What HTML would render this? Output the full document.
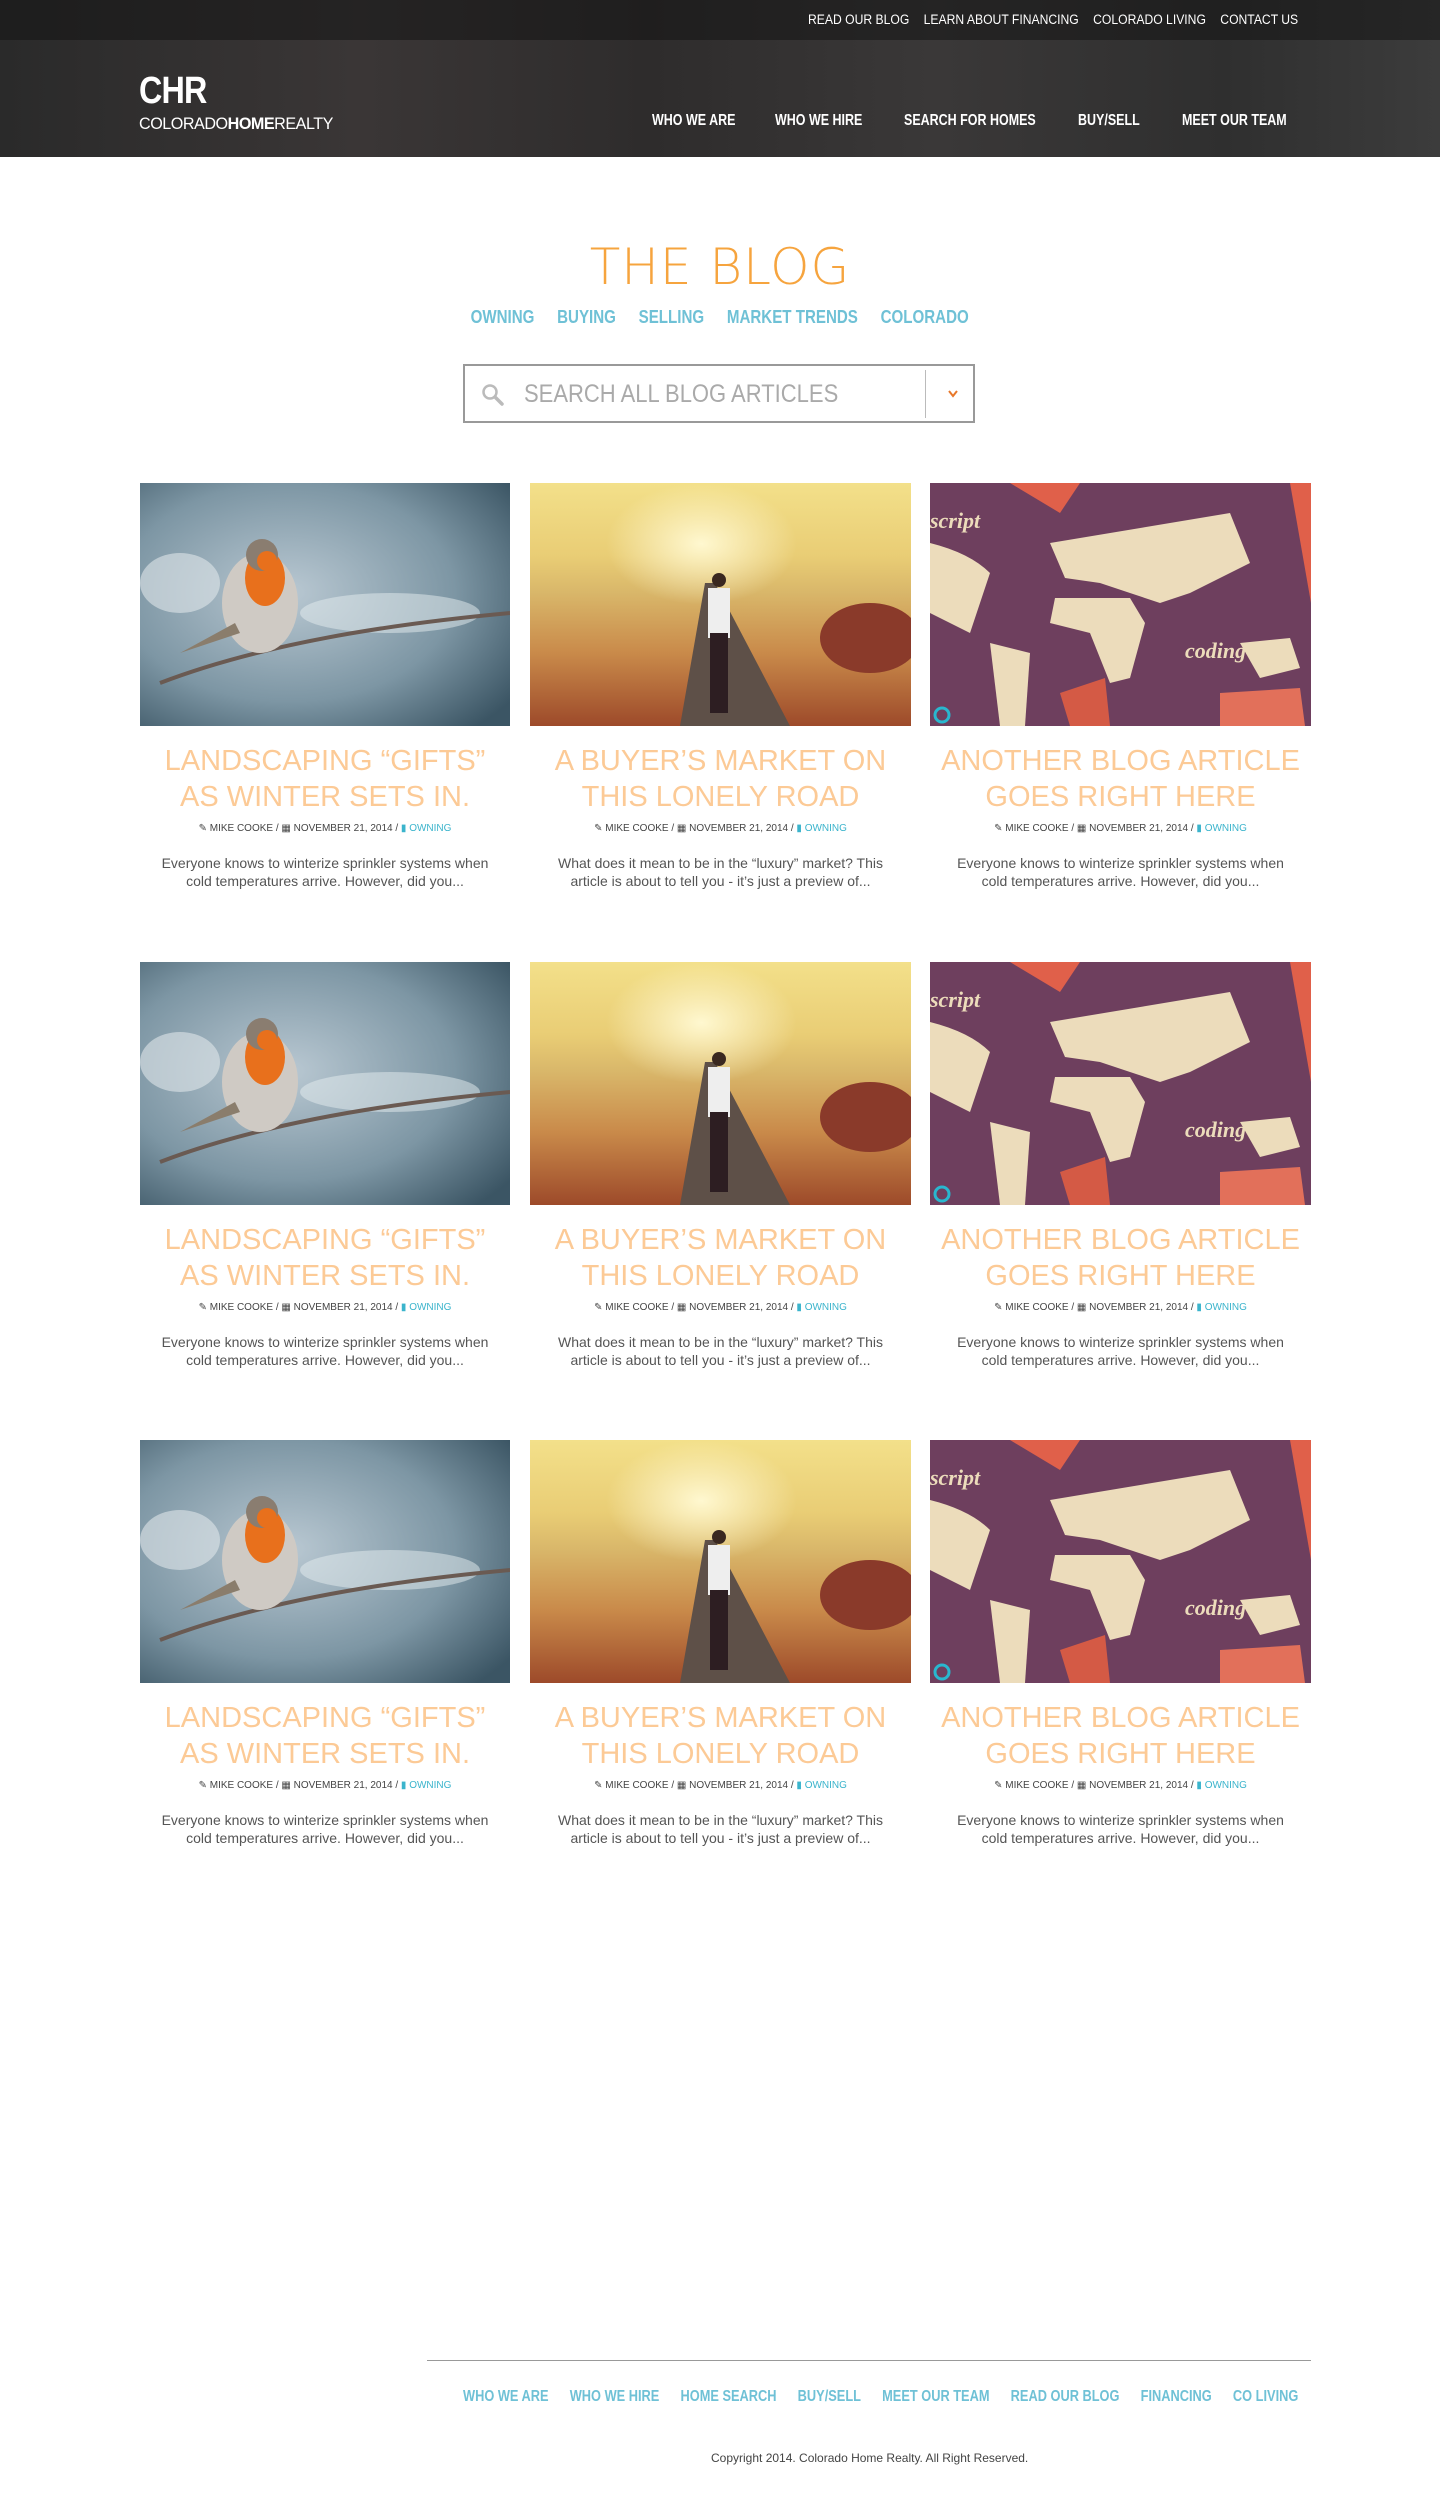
<!DOCTYPE html>
<html><head><meta charset="utf-8"><style>
*{margin:0;padding:0;box-sizing:border-box}
body{width:1440px;height:2500px;background:#fff;font-family:"Liberation Sans",sans-serif;position:relative;overflow:hidden}
.abs{position:absolute}
.hdr{left:0;top:0;width:1440px;height:157px;background:linear-gradient(90deg,#2a2a2a 0%,#3a3636 25%,#2e2c2c 45%,#3a3838 65%,#2f2f2f 85%,#3c3c3c 100%)}
.topbar{left:0;top:0;width:1440px;height:40px;background:rgba(20,20,20,.55)}
.sx{transform-origin:0 0;white-space:nowrap}
.toplinks{top:12px;left:808px;color:#fff;font-size:13.5px;transform:scaleX(.9)}
.toplinks span{margin-right:16px}
.nav{top:112px;color:#fff;font-size:16px;font-weight:bold;transform:scaleX(.78)}
.title{top:238px;left:0;width:1440px;text-align:center;color:#f6a43e;font-size:50px;letter-spacing:1px;font-family:"DejaVu Sans","Liberation Sans",sans-serif;font-weight:200}
.cats{top:307px;left:0;width:1440px;text-align:center;color:#6fc1d6;font-size:18px;font-weight:bold;transform:scaleX(.84);transform-origin:718px 0;white-space:nowrap}
.cats span{margin:0 11px}
.search{left:463px;top:364px;width:512px;height:59px;border:2px solid #999}
.card .img{position:absolute;top:0;left:0}
.ttl{position:absolute;left:0;width:100%;text-align:center;color:#fcca96;font-size:29px;line-height:36px;top:260px;white-space:nowrap}
.meta{position:absolute;left:0;width:100%;text-align:center;top:340px;font-size:10px;color:#444;white-space:nowrap}
.meta b{color:#3bb4cc;font-weight:normal}
.ex{position:absolute;left:-10px;width:calc(100% + 20px);text-align:center;top:371px;font-size:14px;line-height:18px;color:#555;white-space:nowrap}
.flinks{top:2388px;left:463px;color:#6fc1d6;font-size:16px;font-weight:bold;transform:scaleX(.8)}
.flinks span{margin-right:22px}
</style></head><body>
<div class="abs hdr"></div>
<div class="abs topbar"></div>
<div class="abs toplinks sx"><span>READ OUR BLOG</span><span>LEARN ABOUT FINANCING</span><span>COLORADO LIVING</span><span>CONTACT US</span></div>
<div class="abs sx" style="left:139px;top:70px;color:#fff;font-size:38px;font-weight:bold;letter-spacing:-1px;transform:scaleX(.85)">CHR</div>
<div class="abs sx" style="left:139px;top:114px;color:#fff;font-size:17px;letter-spacing:-0.5px;transform:scaleX(.95)">COLORADO<b>HOME</b>REALTY</div>
<div class="abs nav sx" style="left:652px">WHO WE ARE</div>
<div class="abs nav sx" style="left:775px">WHO WE HIRE</div>
<div class="abs nav sx" style="left:904px">SEARCH FOR HOMES</div>
<div class="abs nav sx" style="left:1078px">BUY/SELL</div>
<div class="abs nav sx" style="left:1182px">MEET OUR TEAM</div>

<div class="abs title">THE BLOG</div>
<div class="abs cats"><span>OWNING</span> <span>BUYING</span> <span>SELLING</span> <span>MARKET TRENDS</span> <span>COLORADO</span></div>
<div class="abs search">
<svg class="abs" style="left:16px;top:17px" width="24" height="24" viewBox="0 0 24 24"><circle cx="9" cy="9" r="6.5" fill="none" stroke="#bbb" stroke-width="2.5"/><path d="M14 14l7 7" stroke="#bbb" stroke-width="3.5" stroke-linecap="round"/></svg>
<div class="abs sx" style="left:59px;top:14px;font-size:25px;color:#aaa;transform:scaleX(.88)">SEARCH ALL BLOG ARTICLES</div>
<div class="abs" style="left:460px;top:4px;width:1px;height:48px;background:#bbb"></div>
<svg class="abs" style="left:483px;top:24px" width="10" height="8" viewBox="0 0 10 8"><path d="M1 1l4 5 4-5" fill="none" stroke="#e8782a" stroke-width="2"/></svg>
</div>

<div id="cards"></div>
<script>
var cols=[{x:140,w:370,t:['LANDSCAPING “GIFTS”','AS WINTER SETS IN.'],e:['Everyone knows to winterize sprinkler systems when','cold temperatures arrive. However, did you...'],k:0},
{x:530,w:381,t:['A BUYER’S MARKET ON','THIS LONELY ROAD'],e:['What does it mean to be in the “luxury” market? This','article is about to tell you - it’s just a preview of...'],k:1},
{x:930,w:381,t:['ANOTHER BLOG ARTICLE','GOES RIGHT HERE'],e:['Everyone knows to winterize sprinkler systems when','cold temperatures arrive. However, did you...'],k:2}];
var imgs=[
function(w){return '<svg width="'+w+'" height="243"><defs><radialGradient id="b1" cx="40%" cy="45%" r="75%"><stop offset="0" stop-color="#b9c8d2"/><stop offset=".6" stop-color="#7d96a4"/><stop offset="1" stop-color="#3b5564"/></radialGradient></defs><rect width="'+w+'" height="243" fill="url(#b1)"/><ellipse cx="40" cy="100" rx="40" ry="30" fill="#dfe6ea" opacity=".6"/><ellipse cx="250" cy="130" rx="90" ry="20" fill="#e6edf0" opacity=".5"/><path d="M20 200 Q150 150 370 130" stroke="#6a5a52" stroke-width="4" fill="none"/><ellipse cx="120" cy="120" rx="38" ry="50" fill="#cfcac4"/><ellipse cx="125" cy="95" rx="20" ry="28" fill="#e8701c"/><circle cx="122" cy="72" r="16" fill="#8a7d70"/><circle cx="127" cy="78" r="10" fill="#e8701c"/><path d="M95 140 L40 170 L100 150Z" fill="#8a7d6c"/></svg>'},
function(w){return '<svg width="'+w+'" height="243"><defs><linearGradient id="b2" x1="0" y1="0" x2="0" y2="1"><stop offset="0" stop-color="#f3e08a"/><stop offset=".3" stop-color="#e9cd75"/><stop offset=".45" stop-color="#d9b76a"/><stop offset=".7" stop-color="#c98a4a"/><stop offset="1" stop-color="#9d4a2a"/></linearGradient><radialGradient id="s2" cx="45%" cy="25%" r="25%"><stop offset="0" stop-color="#fff8d0"/><stop offset="1" stop-color="#fff8d0" stop-opacity="0"/></radialGradient></defs><rect width="'+w+'" height="243" fill="url(#b2)"/><rect width="'+w+'" height="243" fill="url(#s2)"/><path d="M150 243 L175 100 L185 100 L260 243Z" fill="#5e5048"/><ellipse cx="340" cy="155" rx="50" ry="35" fill="#8a3a2a"/><rect x="178" y="105" width="22" height="50" fill="#eee"/><rect x="180" y="150" width="18" height="80" fill="#2d1e22"/><circle cx="189" cy="97" r="7" fill="#3a2820"/></svg>'},
function(w){return '<svg width="'+w+'" height="243"><rect width="'+w+'" height="243" fill="#6e3f5e"/><path d="M80 0 L150 0 L130 30Z" fill="#e0604a"/><path d="M360 0 L381 0 L381 120Z" fill="#e0604a"/><path d="M0 60 Q40 70 60 90 L40 150 Q20 140 0 130Z" fill="#ecdcbb"/><path d="M60 160 L100 170 L95 243 L70 243Z" fill="#ecdcbb"/><path d="M120 60 L300 30 L320 80 L260 110 L230 120 L200 110 L170 100 L135 95Z" fill="#ecdcbb"/><path d="M125 115 L200 115 L215 140 L200 195 L180 200 L160 150 L120 140Z" fill="#ecdcbb"/><path d="M310 160 L360 155 L370 185 L330 195Z" fill="#ecdcbb"/><path d="M130 210 L175 195 L180 243 L140 243Z" fill="#d45a45"/><path d="M290 210 L370 205 L375 243 L290 243Z" fill="#e2705a"/><text x="255" y="175" font-family=\'Liberation Serif\' font-style="italic" font-weight="bold" font-size="22" fill="#ecdcbb">coding</text><text x="0" y="45" font-family=\'Liberation Serif\' font-style="italic" font-weight="bold" font-size="22" fill="#ecdcbb">script</text><circle cx="12" cy="232" r="7" fill="none" stroke="#29b7cf" stroke-width="3"/></svg>'}];
var h='';
[483,962,1440].forEach(function(y){cols.forEach(function(c){
h+='<div class="abs card" style="left:'+c.x+'px;top:'+y+'px;width:'+c.w+'px;height:420px"><div class="img">'+imgs[c.k](c.w)+'</div>'+
'<div class="ttl">'+c.t[0]+'<br>'+c.t[1]+'</div>'+
'<div class="meta">&#9998; MIKE COOKE / &#9638; NOVEMBER 21, 2014 / <b>&#9646; OWNING</b></div>'+
'<div class="ex">'+c.e[0]+'<br>'+c.e[1]+'</div></div>';});});
document.getElementById('cards').innerHTML=h;
</script>

<div class="abs" style="left:427px;top:2360px;width:884px;height:1px;background:#999"></div>
<div class="abs flinks sx"><span>WHO WE ARE</span> <span>WHO WE HIRE</span> <span>HOME SEARCH</span> <span>BUY/SELL</span> <span>MEET OUR TEAM</span> <span>READ OUR BLOG</span> <span>FINANCING</span> <span>CO LIVING</span></div>
<div class="abs" style="left:711px;top:2451px;font-size:12px;color:#444;white-space:nowrap">Copyright 2014. Colorado Home Realty. All Right Reserved.</div>
</body></html>
